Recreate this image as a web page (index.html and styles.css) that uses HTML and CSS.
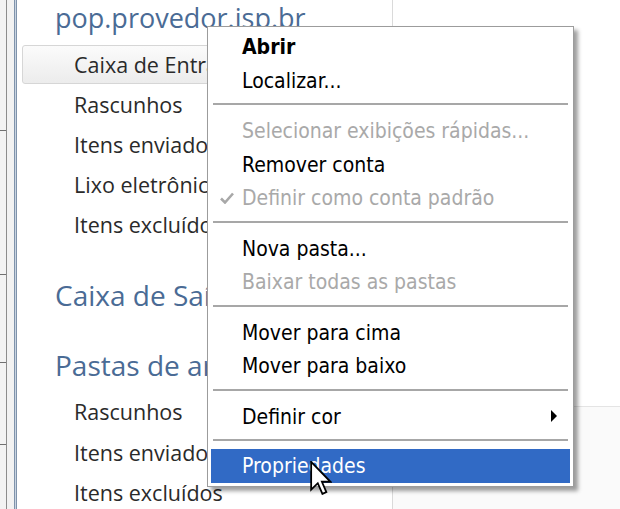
FILE: index.html
```html
<!DOCTYPE html>
<html lang="pt-BR">
<head>
<meta charset="utf-8">
<title>Menu de conta</title>
<link rel="stylesheet" href="styles.css">
</head>
<body>
<div class="window">
  <div class="edge">
    <div class="edge-seg s1"></div>
    <div class="edge-seg s2"></div>
    <div class="edge-seg s3"></div>
    <div class="edge-seg s4"></div>
    <div class="edge-seg s5"></div>
  </div>
  <div class="gutter"></div>
  <div class="rail"></div>
  <div class="folders">
    <div class="account">pop.provedor.isp.br</div>
    <div class="folder selected">Caixa de Entrada</div>
    <div class="folder">Rascunhos</div>
    <div class="folder">Itens enviados</div>
    <div class="folder">Lixo eletrônico</div>
    <div class="folder">Itens excluídos</div>
    <div class="group">Caixa de Saída</div>
    <div class="group">Pastas de arquivo</div>
    <div class="subfolders">
      <div class="folder">Rascunhos</div>
      <div class="folder">Itens enviados</div>
      <div class="folder">Itens excluídos</div>
    </div>
  </div>
  <div class="main">
    <div class="main-top"></div>
    <div class="main-bottom"></div>
  </div>
</div>

<div class="menu">
  <div class="item bold">Abrir</div>
  <div class="item">Localizar...</div>
  <div class="sep"></div>
  <div class="item disabled">Selecionar exibições rápidas...</div>
  <div class="item">Remover conta</div>
  <div class="item disabled checked"><svg class="check" viewBox="0 0 14 12" width="14" height="12"><path d="M1 6.5 L5 10.5 L13 1.5" fill="none" stroke="#a8a8a8" stroke-width="2.6"/></svg>Definir como conta padrão</div>
  <div class="sep"></div>
  <div class="item">Nova pasta...</div>
  <div class="item disabled">Baixar todas as pastas</div>
  <div class="sep"></div>
  <div class="item">Mover para cima</div>
  <div class="item">Mover para baixo</div>
  <div class="sep"></div>
  <div class="item has-sub">Definir cor<span class="arrow"></span></div>
  <div class="sep"></div>
  <div class="item active">Propriedades</div>
</div>

<svg class="cursor" width="22" height="34" viewBox="0 0 12 19">
  <path d="M0.5 0.5 L0.5 16 L4.2 12.4 L6.8 18.4 L9 17.4 L6.5 11.6 L11.3 11.6 Z" fill="#fff" stroke="#000" stroke-width="1" stroke-linejoin="miter"/>
</svg>
</body>
</html>
```

FILE: styles.css
```css
* { box-sizing: border-box; }

html, body {
  margin: 0;
  padding: 0;
}

body {
  width: 620px;
  height: 509px;
  overflow: hidden;
  background: #ffffff;
  font-family: "Open Sans", "Noto Sans", sans-serif;
  position: relative;
}

.window {
  display: flex;
  height: 509px;
}

.edge {
  width: 7px;
  display: flex;
  flex-direction: column;
  background: #f3f3f3;
  border-right: 1px solid #8c8c8c;
}

.edge-seg { border-bottom: 1px solid #707070; }
.s1 { height: 131px; }
.s2 { height: 144px; }
.s3 { height: 88px; }
.s4 { height: 82px; }
.s5 { flex: 1; border-bottom: none; }

.gutter {
  width: 7px;
  background: #f2f2f2;
}

.rail {
  width: 3px;
  border-left: 1px solid #7f93ab;
  border-right: 1px solid #7f93ab;
  background: #c9d4e1;
}

.folders {
  width: 376px;
  border-right: 1px solid #dadada;
  background: #ffffff;
  display: flex;
  flex-direction: column;
  white-space: nowrap;
  overflow: hidden;
}

.account,
.group {
  color: #4a6b95;
  font-size: 27px;
  padding-left: 38px;
  height: 40px;
  line-height: 40px;
}

.account {
  margin-top: -2px;
  margin-bottom: 7px;
}

.group {
  margin-top: 30px;
  font-size: 28px;
}

.subfolders { margin-top: 7px; }

.folder {
  height: 40.5px;
  line-height: 40px;
  padding-left: 57px;
  font-size: 21.5px;
  color: #2a2a2a;
}

.folder.selected {
  margin: 0 5px;
  padding-left: 51px;
  height: 39px;
  margin-bottom: 1px;
  line-height: 37px;
  border: 1px solid #d6d6d6;
  border-radius: 3px;
  background: linear-gradient(#fbfbfb, #ececec);
}

.main {
  flex: 1;
  display: flex;
  flex-direction: column;
}

.main-top {
  height: 407px;
  background: #ffffff;
  border-bottom: 1px solid #e4e4e4;
}

.main-bottom {
  flex: 1;
  background: #fafafa;
}

/* context menu (overlay) */
.menu {
  position: absolute;
  left: 207px;
  top: 26px;
  width: 367px;
  padding: 2px 3px 3px 3px;
  background: #ffffff;
  border: 1px solid #9c9c9c;
  box-shadow: 4px 4px 4px rgba(0, 0, 0, 0.38);
  font-family: "DejaVu Sans Condensed", "DejaVu Sans", sans-serif;
  font-size: 21px;
  color: #000;
}

.item {
  position: relative;
  height: 33.5px;
  line-height: 36px;
  padding-left: 31px;
  white-space: nowrap;
}

.item.bold { font-weight: bold; }

.item.disabled { color: #a9a9a9; }

.item.active {
  background: #316ac5;
  color: #ffffff;
  line-height: 35px;
}

.check {
  position: absolute;
  left: 9px;
  top: 12px;
}

.arrow {
  position: absolute;
  right: 13px;
  top: 11px;
  width: 0;
  height: 0;
  border-top: 6px solid transparent;
  border-bottom: 6px solid transparent;
  border-left: 6px solid #000;
}

.sep {
  height: 17px;
  padding: 7px 2px 0 2px;
}

.sep::before {
  content: "";
  display: block;
  height: 2px;
  background: #a7a7a7;
}

.cursor {
  position: absolute;
  left: 310px;
  top: 461px;
}
```
